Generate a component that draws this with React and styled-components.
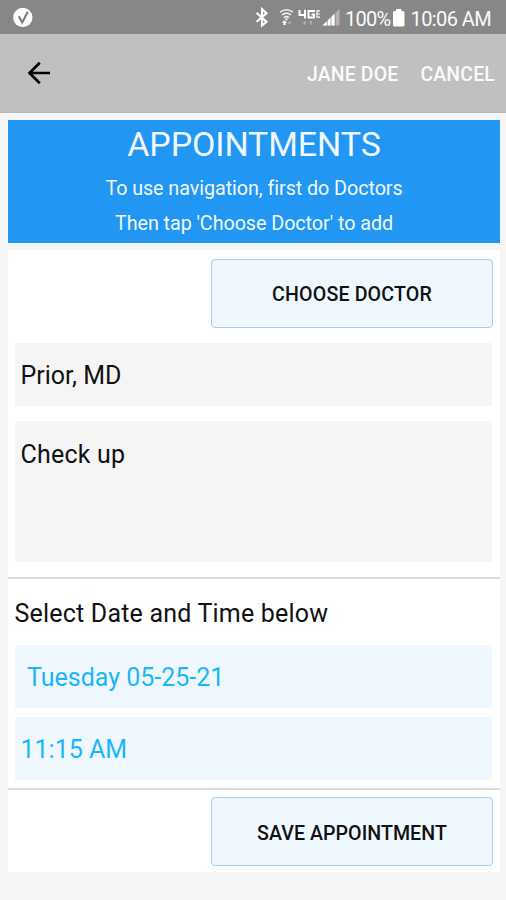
import React from "react";
import styled, { createGlobalStyle } from "styled-components";

const GlobalStyle = createGlobalStyle`
  * { box-sizing: border-box; }
  body { margin: 0; background: #f5f5f5; }
`;

const Screen = styled.div`
  width: 506px;
  height: 900px;
  overflow: hidden;
  background: #f5f5f5;
  color: #111;
  font-family: Roboto, "Liberation Sans", sans-serif;
`;

const StatusBar = styled.div`
  height: 34px;
  padding: 2px 15px 0 13px;
  display: flex;
  align-items: center;
  justify-content: space-between;
  background: #878787;
  color: #fafafa;
`;

const StatusItems = styled.div`
  display: flex;
  align-items: center;
  svg { display: block; flex: none; }
`;

const StatusText = styled.span`
  font-size: 20px;
  line-height: 24px;
  padding-top: 1px;
  white-space: nowrap;
  letter-spacing: ${(p) => p.$track}px;
  margin-left: ${(p) => p.$gap}px;
`;

const AppBar = styled.header`
  height: 79px;
  padding: 0 11px 0 27px;
  display: flex;
  align-items: center;
  background: #c0c0c0;
  border-bottom: 1px solid #b5b5b5;
`;

const BackButton = styled.button`
  border: 0;
  padding: 0;
  margin-right: auto;
  background: none;
  color: #000;
  svg { display: block; }
`;

const BarAction = styled.button`
  border: 0;
  padding: 3px 0 0;
  margin-left: 22px;
  background: none;
  color: #fbfbfb;
  font: 500 19.4px/24px Roboto, sans-serif;
  letter-spacing: ${(p) => p.$track}px;
`;

const Banner = styled.section`
  margin: 7px 6px 7px 8px;
  height: 123px;
  background: #2196f3;
  color: #f0f8ff;
  text-align: center;
`;

const Title = styled.h1`
  margin: 0;
  padding-top: 4px;
  font-weight: 400;
  font-size: 34px;
  line-height: 40px;
  letter-spacing: ${(p) => p.$track}px;
`;

const Hint = styled.p`
  margin: 0;
  font-size: 19.8px;
  line-height: 35px;
  letter-spacing: ${(p) => p.$track}px;
  &:first-of-type { margin-top: 7px; }
`;

const Card = styled.main`
  margin: 0 6px 0 8px;
  height: 622px;
  background: #fff;
  border-radius: 0 0 4px 0;
`;

const ButtonRow = styled.div`
  display: flex;
  justify-content: flex-end;
  padding: ${(p) => p.$top}px 7px 0 0;
`;

const ActionButton = styled.button`
  width: 282px;
  height: 69px;
  padding: ${(p) => p.$nudge}px 0 0;
  border: 1.5px solid #a9ccf5;
  border-radius: 4px;
  background: #f0f8ff;
  color: #111;
  font: 500 19.6px/24px Roboto, sans-serif;
  letter-spacing: ${(p) => p.$track}px;
`;

const Field = styled.div`
  margin: ${(p) => p.$top}px 8px 0 7px;
  height: ${(p) => p.$height}px;
  padding: ${(p) => p.$inset || 17}px 0 0 ${(p) => p.$indent}px;
  background: ${(p) => (p.$picker ? "#f0f8ff" : "#f5f5f5")};
  color: ${(p) => (p.$picker ? "#1cb6f8" : "#111")};
  font-size: 25px;
  line-height: 32px;
  letter-spacing: ${(p) => p.$track}px;
`;

const Divider = styled.hr`
  margin: ${(p) => p.$top}px 0 0;
  border: 0;
  height: 2px;
  background: #dcdcdc;
`;

const SectionLabel = styled.div`
  padding: 19px 0 0 6.5px;
  height: 66px;
  font-size: 25px;
  line-height: 32px;
  letter-spacing: ${(p) => p.$track}px;
`;

const CheckBadge = () => (
  <svg width="20" height="20" viewBox="0 0 20 20">
    <circle cx="9.8" cy="9.5" r="9.7" fill="#fff" />
    <path d="M5.8 8.2 9.3 14.5 14.8 3.8" fill="none" stroke="#777" strokeWidth="2" />
  </svg>
);

const StatusIcons = () => (
  <svg width="86" height="24" viewBox="0 0 86 24">
    <path d="M1.5 6.8 11.5 15.8 7 19.6V3.2L11.5 7.2 1.5 15.8" fill="none" stroke="#fff" strokeWidth="2.1" />
    <g fill="none" stroke="#eee" strokeWidth="1.6">
      <path d="M25 6.2Q31.5 1.2 38 6.2" />
      <path d="M27 9Q31.5 5.2 36 9" />
      <path d="M29 11.6Q31.5 9.6 34 11.6" />
    </g>
    <path d="M31.5 15 29.8 12.5H33.2Z" fill="#eee" />
    <path d="M29.3 14 27 17H28.4V19H30.6V17H32Z" fill="#fff" />
    <path d="M33 15.5H36V17L34.5 19 33 17Z" fill="#aaa" />
    <g fill="none" stroke="#fff" strokeWidth="2">
      <path d="M44.5 4V9H50.5M50 3.8V12.6" />
      <path d="M60 5H53.5V11.5H59V8.5H56.5" />
      <path d="M65 4.8H62V11.2H65M62 8H65" strokeWidth="1.2" />
    </g>
    <path d="M50 18.5V15M48.5 17 50 18.6M56 15V18.5M54.5 16.5 56 15" stroke="#b5b5b5" strokeWidth="1.4" fill="none" />
    <path d="M67.5 19.5 84.5 3V19.5Z" fill="#b4b4b4" />
    <path d="M67.5 19.5 79.5 7.8V19.5Z" fill="#fff" />
    <path d="M72.3 13V20M76 9V20M80.5 5V20" stroke="#919191" strokeWidth=".8" />
  </svg>
);

const Battery = () => (
  <svg width="16" height="20" viewBox="0 0 16 20">
    <path d="M5 1H10.5V3H12Q13.5 3 13.5 4.5V17Q13.5 18.5 12 18.5H3.5Q2 18.5 2 17V4.5Q2 3 3.5 3H5Z" fill="#fff" />
  </svg>
);

const BackArrow = () => (
  <svg width="24" height="24" viewBox="0 0 24 24" fill="none" stroke="#000" strokeWidth="2.7">
    <path d="M23 12H3M12.8 1.8 2.5 12 12.8 22.2" />
  </svg>
);

export default function App() {
  return (
    <Screen>
      <GlobalStyle />
      <StatusBar>
        <CheckBadge />
        <StatusItems>
          <StatusIcons />
          <StatusText $track={-0.7} $gap={4}>100%</StatusText>
          <Battery />
          <StatusText $track={-0.6} $gap={4}>10:06 AM</StatusText>
        </StatusItems>
      </StatusBar>
      <AppBar>
        <BackButton aria-label="Back"><BackArrow /></BackButton>
        <BarAction $track={0.2}>JANE DOE</BarAction>
        <BarAction $track={0.2}>CANCEL</BarAction>
      </AppBar>
      <Banner>
        <Title $track={-0.1}>APPOINTMENTS</Title>
        <Hint $track={-0.08}>To use navigation, first do Doctors</Hint>
        <Hint $track={-0.08}>Then tap 'Choose Doctor' to add</Hint>
      </Banner>
      <Card>
        <ButtonRow $top={9}>
          <ActionButton $nudge={2} $track={0.15}>CHOOSE DOCTOR</ActionButton>
        </ButtonRow>
        <Field $top={15} $height={63} $indent={5.5} $track={0}>Prior, MD</Field>
        <Field $top={15} $height={141} $inset={18} $indent={5.5} $track={0.2}>Check up</Field>
        <Divider $top={15} />
        <SectionLabel $track={0.2}>Select Date and Time below</SectionLabel>
        <Field $picker $top={0} $height={63} $indent={12} $track={0}>Tuesday 05-25-21</Field>
        <Field $picker $top={9} $height={63} $indent={5.5} $track={0}>11:15 AM</Field>
        <Divider $top={8} />
        <ButtonRow $top={7}>
          <ActionButton $nudge={4} $track={0.05}>SAVE APPOINTMENT</ActionButton>
        </ButtonRow>
      </Card>
    </Screen>
  );
}
